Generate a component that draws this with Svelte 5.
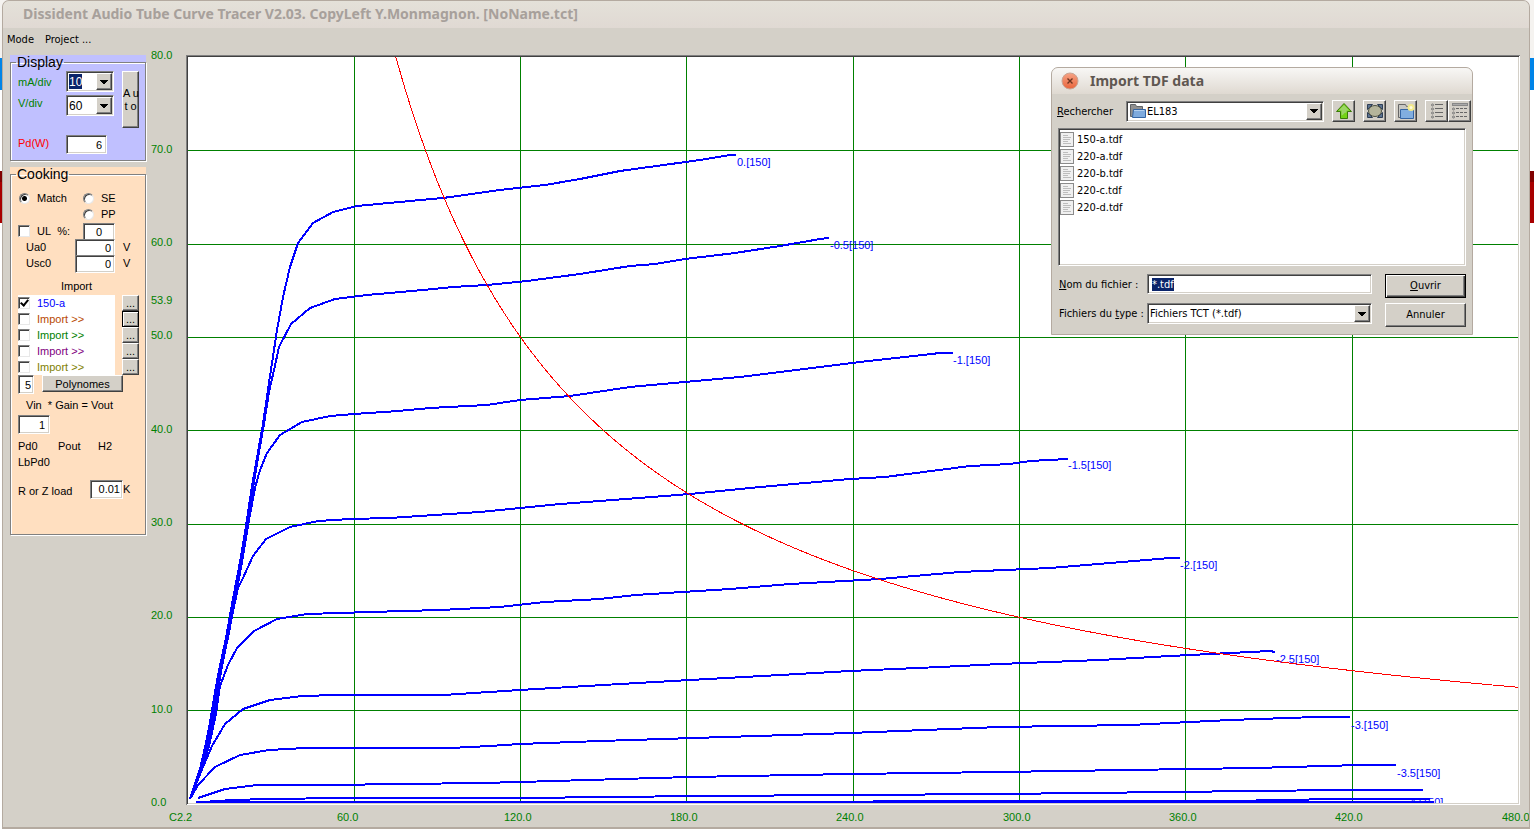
<script lang="ts">
	import { onMount } from 'svelte';

	interface Curve {
		label: string;
		points: string;
		labelX: number;
		labelY: number;
	}

	const plot = { left: 188, top: 57, right: 1518, bottom: 803 };
	const pxPerVolt = 2.772;
	const pxPerMilliamp = 9.333;
	const power = 6;

	const x = (volts: number) => plot.left + volts * pxPerVolt;
	const y = (milliamps: number) => plot.bottom + 1 - milliamps * pxPerMilliamp;

	const voltTicks = [60, 120, 180, 240, 300, 360, 420, 480];
	const currentTicks = [80, 70, 60, 50, 40, 30, 20, 10, 0];

	let powerCurve = '';
	for (let volts = 75; volts <= 480; volts += 3) {
		powerCurve += `${x(volts)},${y((power * 1000) / volts)} `;
	}

	const curves: Curve[] = [
		{
			label: '0.[150]',
			points:
				'190,799 200,769 204,752 209,728 213,704 218,675 226,638 232,604 240,562 246,526 252,486 258,452 263,424 270,376 274,350 277,330 283,297 290,267 298,243 313,223 333,212 357,206 410,201 443,198 500,190 545,185 580,179 620,171 700,160 730,155 736,155',
			labelX: 737,
			labelY: 166,
		},
		{
			label: '-0.5[150]',
			points:
				'190,799 201,769 206,750 211,724 216,698 221,668 228,638 234,604 241,564 247,528 253,488 259,452 264,424 269,392 274,370 279,347 291,324 310,308 335,299 367,295 423,290 453,287 487,285 527,281 580,274 630,266 655,264 685,259 735,253 780,246 820,239 829,238',
			labelX: 830,
			labelY: 249,
		},
		{
			label: '-1.[150]',
			points:
				'190,799 202,768 208,748 213,720 218,690 224,654 231,620 237,590 243,556 249,520 255,488 260,470 267,453 280,435 302,422 330,416 354,414 398,411 430,408 487,405 520,400 570,396 630,387 740,377 860,362 940,353 953,353',
			labelX: 953,
			labelY: 364,
		},
		{
			label: '-1.5[150]',
			points:
				'190,799 202,767 209,744 215,712 220,676 226,646 232,616 238,588 243,578 253,556 266,539 290,527 318,521 350,519 390,518 480,512 560,504 600,501 690,494 760,487 850,479 885,477 970,466 1010,464 1030,461 1068,459',
			labelX: 1068,
			labelY: 469,
		},
		{
			label: '-2.[150]',
			points:
				'190,799 202,768 209,746 216,714 220,686 228,665 237,648 254,631 277,619 307,614 370,612 440,610 500,607 545,602 600,599 635,595 730,589 790,584 880,579 960,572 1050,568 1170,558 1180,558',
			labelX: 1180,
			labelY: 569,
		},
		{
			label: '-2.5[150]',
			points:
				'190,799 203,767 212,746 225,724 243,709 270,700 302,696 337,695 443,695 520,690 620,684 690,680 780,675 850,671 940,667 1000,664 1100,660 1170,656 1270,651 1275,652',
			labelX: 1276,
			labelY: 663,
		},
		{
			label: '-3.[150]',
			points:
				'190,799 198,785 215,767 240,755 269,750 305,748 450,748 490,746 520,744 600,741 850,733 1000,727 1130,725 1230,720 1316,717 1350,717',
			labelX: 1351,
			labelY: 729,
		},
		{
			label: '-3.5[150]',
			points:
				'198,798 225,789 257,785 327,785 480,783 520,782 690,777 850,774 1000,772 1255,768 1360,765 1396,765',
			labelX: 1397,
			labelY: 777,
		},
		{
			label: '-4.[150]',
			points: '203,802 233,800 267,799 345,798 520,798 700,796 1000,794 1340,790 1423,790',
			labelX: 1406,
			labelY: 806,
		},
		{ label: '', points: '196,802 530,802 1230,801 1336,799 1430,799', labelX: 0, labelY: 0 },
		{ label: '', points: '230,802 1434,802', labelX: 0, labelY: 0 },
	];

	const imports = [
		{ name: '150-a', color: '#0000ff', checked: true, current: false },
		{ name: 'Import >>', color: '#b84800', checked: false, current: true },
		{ name: 'Import >>', color: '#008000', checked: false, current: false },
		{ name: 'Import >>', color: '#800080', checked: false, current: false },
		{ name: 'Import >>', color: '#808000', checked: false, current: false },
	];

	const files = ['150-a.tdf', '220-a.tdf', '220-b.tdf', '220-c.tdf', '220-d.tdf'];

	let fileInput: HTMLInputElement;

	onMount(() => {
		fileInput.focus();
		fileInput.select();
	});
</script>

{#snippet arrow()}
	<span class="arrow" aria-hidden="true">
		<svg width="8" height="4" viewBox="0 0 8 4" shape-rendering="crispEdges">
			<path d="M0 0h8v1h-1v1h-1v1h-1v1h-2v-1h-1v-1h-1v-1h-1z" fill="#000" />
		</svg>
	</span>
{/snippet}

<div class="desktop">
	<main class="window">
		<header class="titlebar">
			Dissident Audio Tube Curve Tracer V2.03. CopyLeft Y.Monmagnon. [NoName.tct]
		</header>
		<nav class="menu">
			<button type="button">Mode</button>
			<button type="button">Project ...</button>
		</nav>

		<div class="workspace">
			<aside class="sidebar">
				<div class="panel display">
					<fieldset>
						<legend>Display</legend>
						<div class="display-body">
							<div class="display-grid">
								<label class="green" for="ma-div">mA/div</label>
								<div class="combo selected">
									<select id="ma-div"><option>10</option></select>
									{@render arrow()}
								</div>
								<label class="green" for="v-div">V/div</label>
								<div class="combo">
									<select id="v-div"><option>60</option></select>
									{@render arrow()}
								</div>
								<label class="red" for="pd">Pd(W)</label>
								<input id="pd" class="box pd" value="6" />
							</div>
							<button type="button" class="raised auto">A u<br />t o</button>
						</div>
					</fieldset>
				</div>

				<div class="panel cooking">
					<fieldset>
						<legend>Cooking</legend>
						<div class="modes">
							<label><input type="radio" name="mode" checked />Match</label>
							<div class="mode-pair">
								<label><input type="radio" name="mode" />SE</label>
								<label><input type="radio" name="mode" />PP</label>
							</div>
						</div>
						<div class="param">
							<label class="check"><input type="checkbox" />UL&nbsp; %:</label>
							<input class="box ul" value="0" aria-label="UL percent" />
							<span class="unit"></span>
						</div>
						<div class="param">
							<label class="indent" for="ua0">Ua0</label>
							<input id="ua0" class="box wide" value="0" />
							<span class="unit">V</span>
						</div>
						<div class="param">
							<label class="indent" for="usc0">Usc0</label>
							<input id="usc0" class="box wide" value="0" />
							<span class="unit">V</span>
						</div>

						<div class="import-title">Import</div>
						{#each imports as item, i (i)}
							<div class="import-row">
								<label class="check" style:color={item.color}>
									<input type="checkbox" checked={item.checked} />{item.name}
								</label>
								<button
									type="button"
									class="raised more"
									class:current={item.current}
									aria-label="Browse {i + 1}">...</button
								>
							</div>
						{/each}
						<div class="poly">
							<input class="box degree" value="5" aria-label="Degree" />
							<button type="button" class="raised">Polynomes</button>
						</div>

						<label class="vin" for="vin">Vin&nbsp; * Gain = Vout</label>
						<input id="vin" class="box gain" value="1" />
						<div class="results">
							<span>Pd0</span><span>Pout</span><span>H2</span>
							<span>LbPd0</span>
						</div>
						<div class="load">
							<label for="load">R or Z load</label>
							<input id="load" class="box" value="0.01" />K
						</div>
					</fieldset>
				</div>
			</aside>

			<svg class="chart" viewBox="146 48 1383 779" role="img" aria-label="Tube curves">
				<defs>
					<clipPath id="plot-area">
						<rect x="188" y="57" width="1330" height="746" />
					</clipPath>
				</defs>
				<g shape-rendering="crispEdges">
					<rect x="186" y="55" width="1334" height="750" fill="#fff" />
					<path d="M186 805V55H1520V56H187V805z" fill="#808080" />
					<path d="M187 804V56H1519V57H188V804z" fill="#404040" />
					<path d="M188 803H1518V57H1519V804H188z" fill="#d4d0c8" />
				</g>
				<g clip-path="url(#plot-area)" shape-rendering="crispEdges">
					{#each voltTicks.slice(0, -1) as volts (volts)}
						<line class="grid" x1={x(volts)} x2={x(volts)} y1={plot.top} y2={plot.bottom} />
					{/each}
					{#each currentTicks.slice(1, -1) as current (current)}
						<line class="grid" x1={plot.left} x2={plot.right} y1={y(current)} y2={y(current)} />
					{/each}
					{#each curves as curve (curve.points)}
						<polyline class="curve" points={curve.points} />
						<text class="curve-label" x={curve.labelX} y={curve.labelY}>{curve.label}</text>
					{/each}
					<polyline class="power" points={powerCurve} />
				</g>
				<g class="ticks">
					{#each currentTicks as current (current)}
						<text x="151" y={Math.round(y(current)) + 2}>{current.toFixed(1)}</text>
					{/each}
					<text x="151" y="304">53.9</text>
					<text x="169" y="821">C2.2</text>
					{#each voltTicks as volts (volts)}
						<text x={Math.round(x(volts)) - 17} y="821">{volts.toFixed(1)}</text>
					{/each}
				</g>
			</svg>
		</div>
	</main>

	<div class="dialog" role="dialog" aria-labelledby="dialog-title">
		<header class="dialog-title">
			<button type="button" class="close" aria-label="Close">
				<svg width="18" height="18" viewBox="0 0 18 18">
					<defs>
						<linearGradient id="close-fill" x1="0" y1="0" x2="0" y2="1">
							<stop offset="0" stop-color="#f6a385" />
							<stop offset="1" stop-color="#e9643b" />
						</linearGradient>
					</defs>
					<circle cx="9" cy="9" r="8" fill="url(#close-fill)" stroke="#c9a493" />
					<path d="M6.5 6.5l5 5m0-5l-5 5" stroke="#6b3420" stroke-width="1.4" />
				</svg>
			</button>
			<span id="dialog-title">Import TDF data</span>
		</header>

		<div class="lookup">
			<label for="folder"><u>R</u>echercher</label>
			<div class="combo">
				<svg class="folder" width="17" height="16" viewBox="0 0 17 16">
					<path d="M1.5 13.5v-12h5l1 2h6v10z" fill="#909090" stroke="#606468" />
					<path d="M3.5 14.5l1-8h12v8z" fill="#7eaadd" stroke="#3465a4" />
					<path d="M5 7.5h10" stroke="#b4d0ee" />
				</svg>
				<select id="folder"><option>EL183</option></select>
				{@render arrow()}
			</div>
			<button type="button" class="raised tool" aria-label="Parent folder">
				<svg width="18" height="18" viewBox="0 0 18 18">
					<path d="M9 1.5l7.5 8h-4v7h-7v-7h-4z" fill="#73d216" stroke="#3b7a08" />
					<path d="M9 3l5 5.5H11.5v2c-3 0-3 3-5 3v-5h-3z" fill="#a5d67a" opacity="0.8" />
				</svg>
			</button>
			<button type="button" class="raised tool" aria-label="Desktop">
				<svg width="18" height="18" viewBox="0 0 18 18">
					<path
						d="M1.5 2.5h5l-5 5zM16.5 2.5h-5l5 5zM1.5 15.5h5l-5-5zM16.5 15.5h-5l5-5z"
						fill="#5b7290"
						stroke="#2e3f56"
					/>
					<ellipse cx="9" cy="9" rx="6.5" ry="5.5" fill="#b5b59b" stroke="#4e5145" />
				</svg>
			</button>
			<button type="button" class="raised tool" aria-label="New folder">
				<svg width="18" height="18" viewBox="0 0 18 18">
					<path d="M1.5 15.5v-13h7l1 2h6v11z" fill="#c8c8c4" stroke="#666" />
					<path d="M3.5 16.5v-9h13v9z" fill="#81aee0" stroke="#3465a4" />
					<circle cx="14" cy="5.5" r="3.5" fill="#f2e98b" />
					<circle cx="14" cy="5.5" r="1.5" fill="#fffde0" />
				</svg>
			</button>
			<div class="views">
				<button type="button" class="raised tool" aria-label="List">
					<svg width="18" height="18" viewBox="0 0 18 18">
						{#each [3, 7, 11, 15] as top (top)}
							<circle cx="4.5" cy={top} r="1" fill="none" stroke="#777" />
							<path d="M7 {top - 0.5}h8" stroke="#666" />
						{/each}
					</svg>
				</button>
				<button type="button" class="raised tool" aria-label="Details">
					<svg width="18" height="18" viewBox="0 0 18 18">
						<rect x="1.5" y="1.5" width="15" height="2" fill="#aaa" stroke="#888" />
						{#each [7, 11, 15] as top (top)}
							<circle cx="2.5" cy={top} r="1" fill="none" stroke="#777" />
							<path d="M5 {top - 0.5}h12" stroke="#666" stroke-dasharray="3 1" />
						{/each}
					</svg>
				</button>
			</div>
		</div>

		<ul class="files">
			{#each files as file (file)}
				<li>
					<svg width="14" height="16" viewBox="0 0 14 16">
						<rect x="0.5" y="0.5" width="13" height="14" fill="#f0f0f0" stroke="#8a8a8a" />
						<path d="M3 3.5h5M3 5.5h8M3 7.5h7M3 9.5h5M3 11.5h8" stroke="#bdbdbd" />
					</svg>
					{file}
				</li>
			{/each}
		</ul>

		<form class="form" onsubmit={(event) => event.preventDefault()}>
			<label for="filename"><u>N</u>om du fichier :</label>
			<input id="filename" class="box" value="*.tdf" bind:this={fileInput} />
			<button type="submit" class="raised default"><u>O</u>uvrir</button>
			<label for="filetype">Fichiers du <u>t</u>ype :</label>
			<div class="combo">
				<select id="filetype"><option>Fichiers TCT (*.tdf)</option></select>
				{@render arrow()}
			</div>
			<button type="button" class="raised">Annuler</button>
		</form>
	</div>
</div>

<style>
	:global(body) {
		margin: 0;
	}

	.desktop {
		--face: #d4d0c8;
		--ui: 'DejaVu Sans Condensed', 'DejaVu Sans', sans-serif;
		position: relative;
		min-height: 100vh;
		box-sizing: border-box;
		padding: 0 4px 0 2px;
		font: 11px/16px 'Liberation Sans', Arial, sans-serif;
		color: #000;
		background: linear-gradient(
			#f5f3f0 58px,
			#0084e8 58px 90px,
			#fff 90px 171px,
			#800000 171px 182px,
			#a80000 182px 223px,
			#fff 223px
		);
	}

	.window {
		background: var(--face);
		border: 1px solid #b4aaa0;
		border-width: 1px 1px 2px;
		border-radius: 7px 7px 0 0;
		overflow: hidden;
	}

	.titlebar {
		height: 27px;
		padding-left: 20px;
		font: bold 14px/26px 'Noto Sans', 'Open Sans', sans-serif;
		color: #a7a09b;
		background: linear-gradient(#e4e1d9, #e0d9d3);
		white-space: nowrap;
		overflow: hidden;
	}

	.menu {
		display: flex;
		gap: 11px;
		padding: 4px 4px 0;
	}

	.menu button {
		padding: 0;
		border: none;
		background: none;
		font: 11px/16px var(--ui);
	}

	.workspace {
		display: flex;
		align-items: flex-start;
	}

	.sidebar {
		flex: 0 0 136px;
		display: flex;
		flex-direction: column;
		gap: 6px;
		padding: 7px 0 0 7px;
	}

	.chart {
		flex: 1;
		min-width: 0;
		height: auto;
	}

	.panel.display {
		background: #c0c0ff;
	}

	.panel.cooking {
		background: #ffdfc0;
	}

	fieldset {
		margin: 0;
		padding: 0 6px 0 7px;
		border: 1px solid #808080;
		box-shadow:
			1px 1px 0 #fff,
			inset 1px 1px 0 #fff;
		min-width: 0;
	}

	legend {
		padding: 0 1px;
		font-size: 14px;
		line-height: 15px;
		margin-left: -2px;
	}

	.display-body {
		display: flex;
		justify-content: space-between;
		padding: 1px 0 5px;
	}

	.display-grid {
		display: grid;
		grid-template-columns: 48px 48px;
		grid-template-rows: 24px 40px 20px;
		align-items: start;
	}

	.display-grid label:first-child {
		padding-top: 3px;
	}

	.green {
		color: #008000;
	}

	.red {
		color: #ff0000;
	}

	.combo,
	.box {
		box-sizing: border-box;
		background: #fff;
		border: 1px solid;
		border-color: #808080 #fff #fff #808080;
		box-shadow:
			inset 1px 1px 0 #404040,
			inset -1px -1px 0 #d4d0c8;
	}

	.combo {
		display: flex;
		align-items: center;
		height: 21px;
		padding: 1px;
	}

	.combo select {
		flex: 1;
		min-width: 0;
		height: 15px;
		padding: 0;
		margin: 0 0 0 1px;
		border: none;
		appearance: none;
		background: transparent;
		font: inherit;
		color: inherit;
	}

	.combo.selected {
		justify-content: space-between;
	}

	.combo.selected select {
		flex: 0 0 13px;
		background: #0a246a;
		color: #fff;
	}

	.display-grid .combo {
		font-size: 12px;
	}

	.arrow {
		box-sizing: border-box;
		flex: 0 0 16px;
		align-self: stretch;
		display: grid;
		place-content: center;
		background: var(--face);
		border: 1px solid;
		border-color: #fff #404040 #404040 #fff;
		box-shadow: inset -1px -1px 0 #808080;
		pointer-events: none;
	}

	.box {
		height: 19px;
		padding: 0 4px;
		font: inherit;
		text-align: right;
		min-width: 0;
		outline: none;
	}

	.pd {
		width: 41px;
	}

	.raised {
		box-sizing: border-box;
		padding: 0;
		font: inherit;
		color: #000;
		background: var(--face);
		border: 1px solid;
		border-color: #fff #404040 #404040 #fff;
		box-shadow: inset -1px -1px 0 #808080;
	}

	.auto {
		width: 17px;
		height: 57px;
		line-height: 13px;
		white-space: nowrap;
	}

	.cooking fieldset {
		padding-bottom: 35px;
	}

	.modes {
		display: flex;
		gap: 15px;
		padding-top: 8px;
	}

	.modes label,
	.check {
		display: flex;
		align-items: center;
		height: 16px;
	}

	.modes input,
	.check input {
		appearance: none;
		flex: none;
		box-sizing: border-box;
		width: 12px;
		height: 12px;
		margin: 0 7px 0 0;
		background: #fff;
		border: 1px solid;
		border-color: #808080 #e8e8e8 #e8e8e8 #808080;
		box-shadow: inset 1px 1px 0 #404040;
	}

	.modes input {
		width: 11px;
		height: 11px;
		margin: 0 7px 0 1px;
		border-radius: 50%;
	}

	.modes input:checked {
		background: radial-gradient(#000 2px, #fff 3px);
	}

	.check input:checked {
		background: #fff;
	}

	.check input:checked::before {
		content: '';
		display: block;
		width: 3px;
		height: 6px;
		margin: 0 0 0 3px;
		border: solid #000;
		border-width: 0 2px 2px 0;
		transform: rotate(40deg);
	}

	.param {
		display: flex;
		justify-content: flex-end;
		height: 16px;
		padding-right: 9px;
	}

	.modes + .param {
		padding-top: 1px;
	}

	.param label {
		margin-right: auto;
	}

	.param .box {
		height: 18px;
		padding: 0 3px;
	}

	.param .ul {
		width: 32px;
		text-align: center;
	}

	.param .wide {
		width: 40px;
	}

	.indent {
		padding-left: 8px;
	}

	.unit {
		width: 7px;
		padding-left: 8px;
	}

	.import-title {
		width: 117px;
		padding: 7px 0 1px;
		text-align: center;
	}

	.import-row {
		display: flex;
		justify-content: space-between;
	}

	.import-row .check {
		width: 97px;
		background: #fff;
	}

	.more {
		width: 17px;
		height: 16px;
		line-height: 12px;
	}

	.more.current {
		border-color: #000;
		box-shadow:
			inset 1px 1px 0 #fff,
			inset -1px -1px 0 #808080;
	}

	.poly {
		display: flex;
		gap: 8px;
	}

	.degree {
		width: 16px;
		padding: 0 2px;
	}

	.poly .raised {
		width: 81px;
		height: 17px;
		line-height: 14px;
	}

	.vin {
		display: block;
		padding: 3px 0 2px 8px;
	}

	.gain {
		display: block;
		width: 32px;
	}

	.results {
		display: grid;
		grid-template-columns: 40px 40px 1fr;
		padding: 4px 0 9px;
	}

	.load {
		display: flex;
		align-items: center;
	}

	.load label {
		flex: 0 0 72px;
		padding-top: 4px;
	}

	.load .box {
		width: 33px;
		padding: 0 2px;
	}

	.grid {
		stroke: #008000;
	}

	.curve {
		fill: none;
		stroke: #0000ff;
		stroke-width: 2;
	}

	.power {
		fill: none;
		stroke: #ff0000;
	}

	.curve-label {
		fill: #0000ff;
	}

	.ticks {
		fill: #008000;
	}

	.dialog {
		position: absolute;
		top: 67px;
		right: 61px;
		box-sizing: border-box;
		width: 422px;
		font: 11px/16px var(--ui);
		background: var(--face);
		border: 1px solid #b4aaa0;
		border-radius: 7px 7px 0 0;
		padding-bottom: 7px;
	}

	.dialog-title {
		display: flex;
		align-items: center;
		gap: 11px;
		height: 26px;
		padding-left: 9px;
		font: bold 14px/26px 'Noto Sans', 'Open Sans', sans-serif;
		color: #5f5751;
		background: linear-gradient(#f8f7f5, #dfd9d1);
		border-radius: 6px 6px 0 0;
	}

	.close {
		display: flex;
		padding: 0;
		border: none;
		background: none;
	}

	.lookup {
		display: flex;
		align-items: center;
		gap: 8px;
		padding: 6px 1px 6px 5px;
	}

	.lookup label {
		flex: 0 0 61px;
		padding-top: 2px;
	}

	.lookup .combo {
		flex: 1;
	}

	.folder {
		margin-left: 1px;
	}

	.tool {
		width: 23px;
		height: 22px;
		display: grid;
		place-content: center;
	}

	.views {
		display: flex;
	}

	.files {
		box-sizing: border-box;
		min-height: 138px;
		margin: 0 6px;
		padding: 2px 1px;
		list-style: none;
		background: #fff;
		border: 1px solid;
		border-color: #808080 #fff #fff #808080;
		box-shadow:
			inset 1px 1px 0 #404040,
			inset -1px -1px 0 #d4d0c8;
	}

	.files li {
		display: flex;
		align-items: center;
		gap: 3px;
		height: 17px;
	}

	.form {
		display: grid;
		grid-template-columns: 80px 1fr 86px;
		gap: 5px 8px;
		padding: 8px 6px 0 7px;
	}

	.form label {
		padding-top: 3px;
		white-space: nowrap;
	}

	.form .box {
		text-align: left;
		height: 20px;
	}

	.form .raised {
		height: 24px;
		margin-left: 5px;
	}

	.form .default {
		border-color: #000;
		box-shadow:
			inset 1px 1px 0 #fff,
			inset -1px -1px 0 #404040,
			inset -2px -2px 0 #808080;
	}

	#filename::selection {
		background: #0a246a;
		color: #fff;
	}
</style>
